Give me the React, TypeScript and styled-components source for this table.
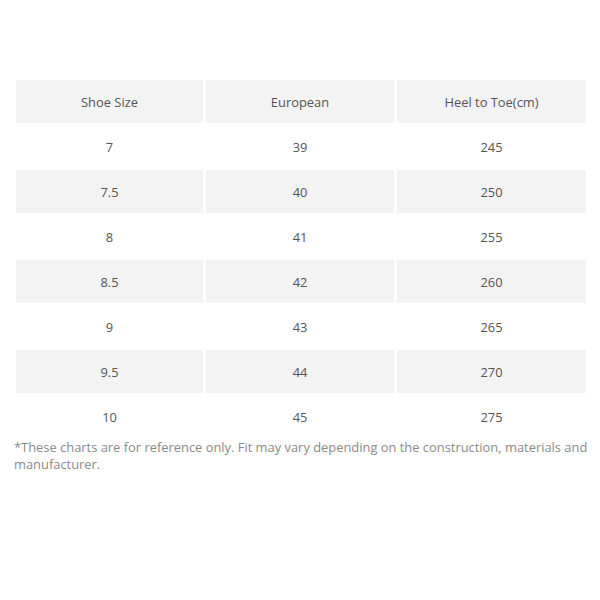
import styled, { createGlobalStyle } from "styled-components";

const GlobalStyle = createGlobalStyle`
  body {
    margin: 0;
    background: #ffffff;
    font-family: "Open Sans", "Liberation Sans", sans-serif;
  }
`;

const Page = styled.div`
  width: 600px;
  height: 600px;
  padding: 80px 10px 0 14px;
  box-sizing: border-box;
`;

const Chart = styled.div`
  display: grid;
  grid-template-columns: 187px 188px 189px;
  grid-auto-rows: 43px;
  column-gap: 3px;
  row-gap: 2px;
  margin-left: 2px;
`;

const Cell = styled.div<{ $shaded: boolean }>`
  display: flex;
  align-items: center;
  justify-content: center;
  background: ${p => (p.$shaded ? "#f3f3f3" : "transparent")};
  color: #555;
  font-size: 12.9px;
`;

const Note = styled.p`
  margin: 1px 0 0;
  font-size: 12.9px;
  line-height: 17px;
  color: #8a8a8a;
`;

const header = ["Shoe Size", "European", "Heel to Toe(cm)"];

const rows = [
  ["7", "39", "245"],
  ["7.5", "40", "250"],
  ["8", "41", "255"],
  ["8.5", "42", "260"],
  ["9", "43", "265"],
  ["9.5", "44", "270"],
  ["10", "45", "275"],
];

export default function App() {
  return (
    <Page>
      <GlobalStyle />
      <Chart>
        {header.map(h => (
          <Cell key={h} $shaded>
            {h}
          </Cell>
        ))}
        {rows.map((row, i) =>
          row.map((value, j) => (
            <Cell key={`${i}-${j}`} $shaded={i % 2 === 1}>
              {value}
            </Cell>
          ))
        )}
      </Chart>
      <Note>
        *These charts are for reference only. Fit may vary depending on the construction, materials and
        manufacturer.
      </Note>
    </Page>
  );
}
